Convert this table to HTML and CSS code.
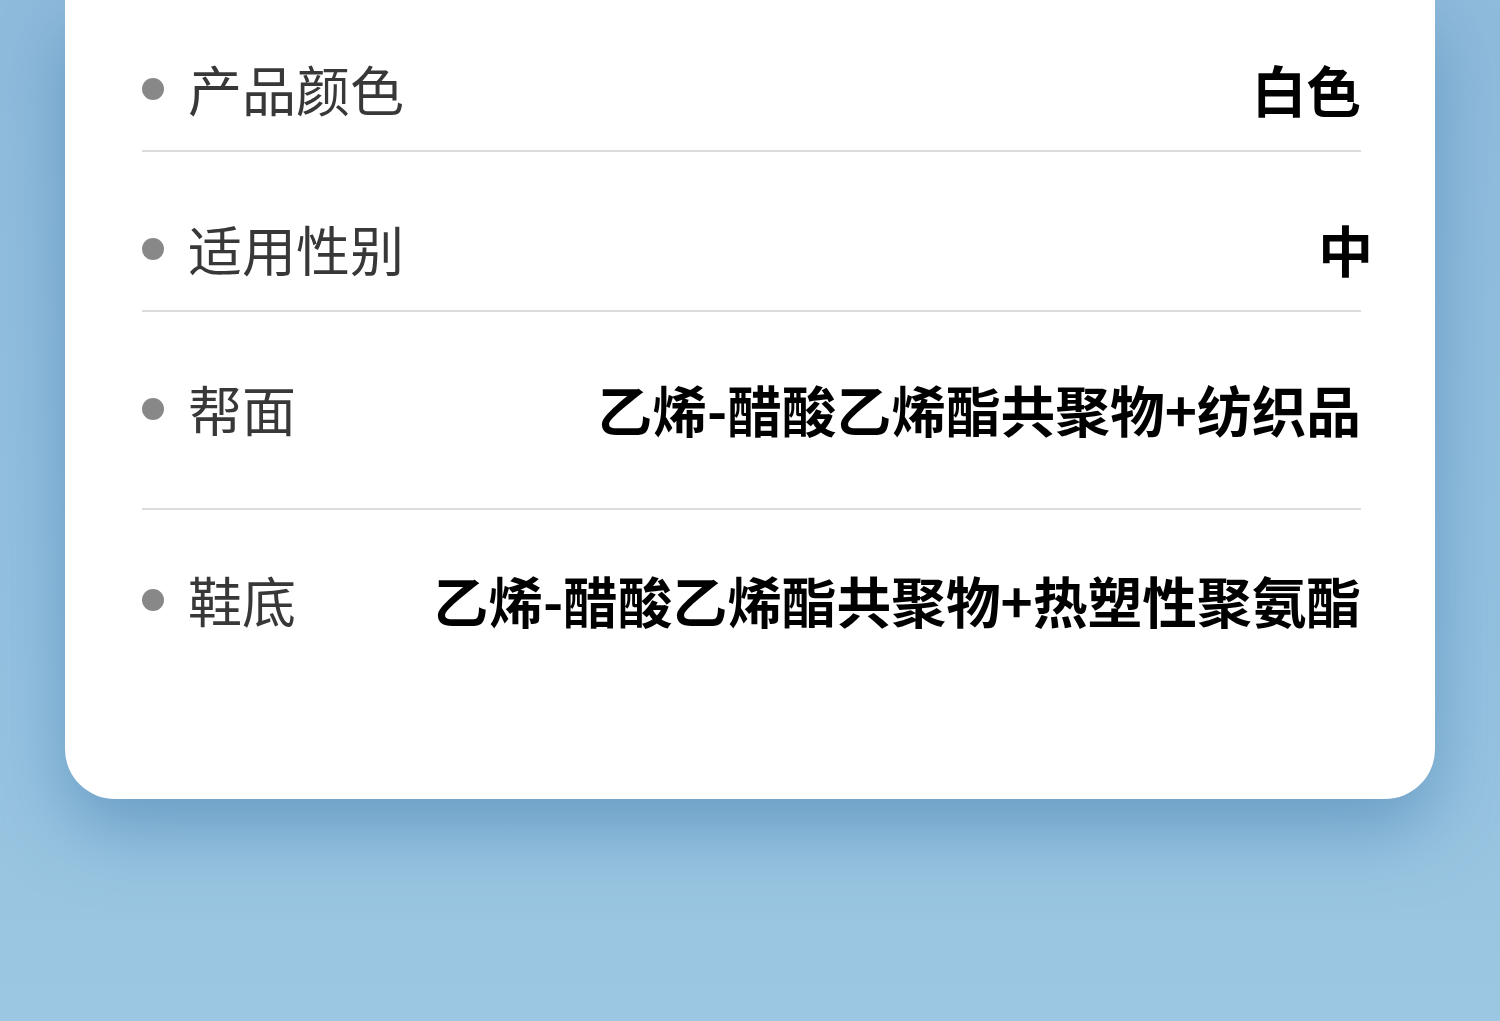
FILE: index.html
```html
<!DOCTYPE html>
<html lang="zh-CN">
<head>
  <meta charset="UTF-8">
  <title>产品参数</title>
  <link rel="stylesheet" href="styles.css">
</head>
<body>

  <div class="spec-card">
    <div class="spec-row first">
      <span class="dot"></span>
      <span class="label">产品颜色</span>
      <span class="value">白色</span>
    </div>
    <div class="spec-row">
      <span class="dot"></span>
      <span class="label">适用性别</span>
      <span class="value nudge">中</span>
    </div>
    <div class="spec-row tall">
      <span class="dot"></span>
      <span class="label">帮面</span>
      <span class="value">乙烯-醋酸乙烯酯共聚物+纺织品</span>
    </div>
    <div class="spec-row last">
      <span class="dot"></span>
      <span class="label">鞋底</span>
      <span class="value">乙烯-醋酸乙烯酯共聚物+热塑性聚氨酯</span>
    </div>
  </div>

</body>
</html>
```

FILE: styles.css
```css
body {
  margin: 0;
  padding: 0;
  height: 1021px;
  overflow: hidden;
  background: linear-gradient(180deg, #8fbbdc 0%, #94c1e0 60%, #9cc7e2 100%);
  font-family: "Noto Sans CJK SC", "Noto Sans", sans-serif;
}

.spec-card {
  margin: 0 65px;
  padding: 0 74px 172px 77px;
  background: #fff;
  border-radius: 0 0 50px 50px;
  box-shadow: 0 30px 70px rgba(60, 120, 170, 0.5);
}

.spec-row {
  display: flex;
  align-items: center;
  padding: 70px 0 34px;
  border-bottom: 2px solid #dcdcdc;
  line-height: 54px;
}

.spec-row.first {
  padding-top: 62px;
}

.spec-row.tall {
  padding-bottom: 72px;
}

.spec-row.last {
  padding-top: 63px;
  padding-bottom: 0;
  border-bottom: none;
}

.dot {
  width: 22px;
  height: 22px;
  border-radius: 50%;
  background: #888;
  flex: none;
  margin-right: 24px;
}

.label {
  font-size: 54px;
  color: #383838;
  white-space: nowrap;
}

.value {
  margin-left: auto;
  font-size: 54.7px;
  font-weight: 700;
  color: #000;
  white-space: nowrap;
}

.value.nudge {
  margin-right: -12px;
}
```
